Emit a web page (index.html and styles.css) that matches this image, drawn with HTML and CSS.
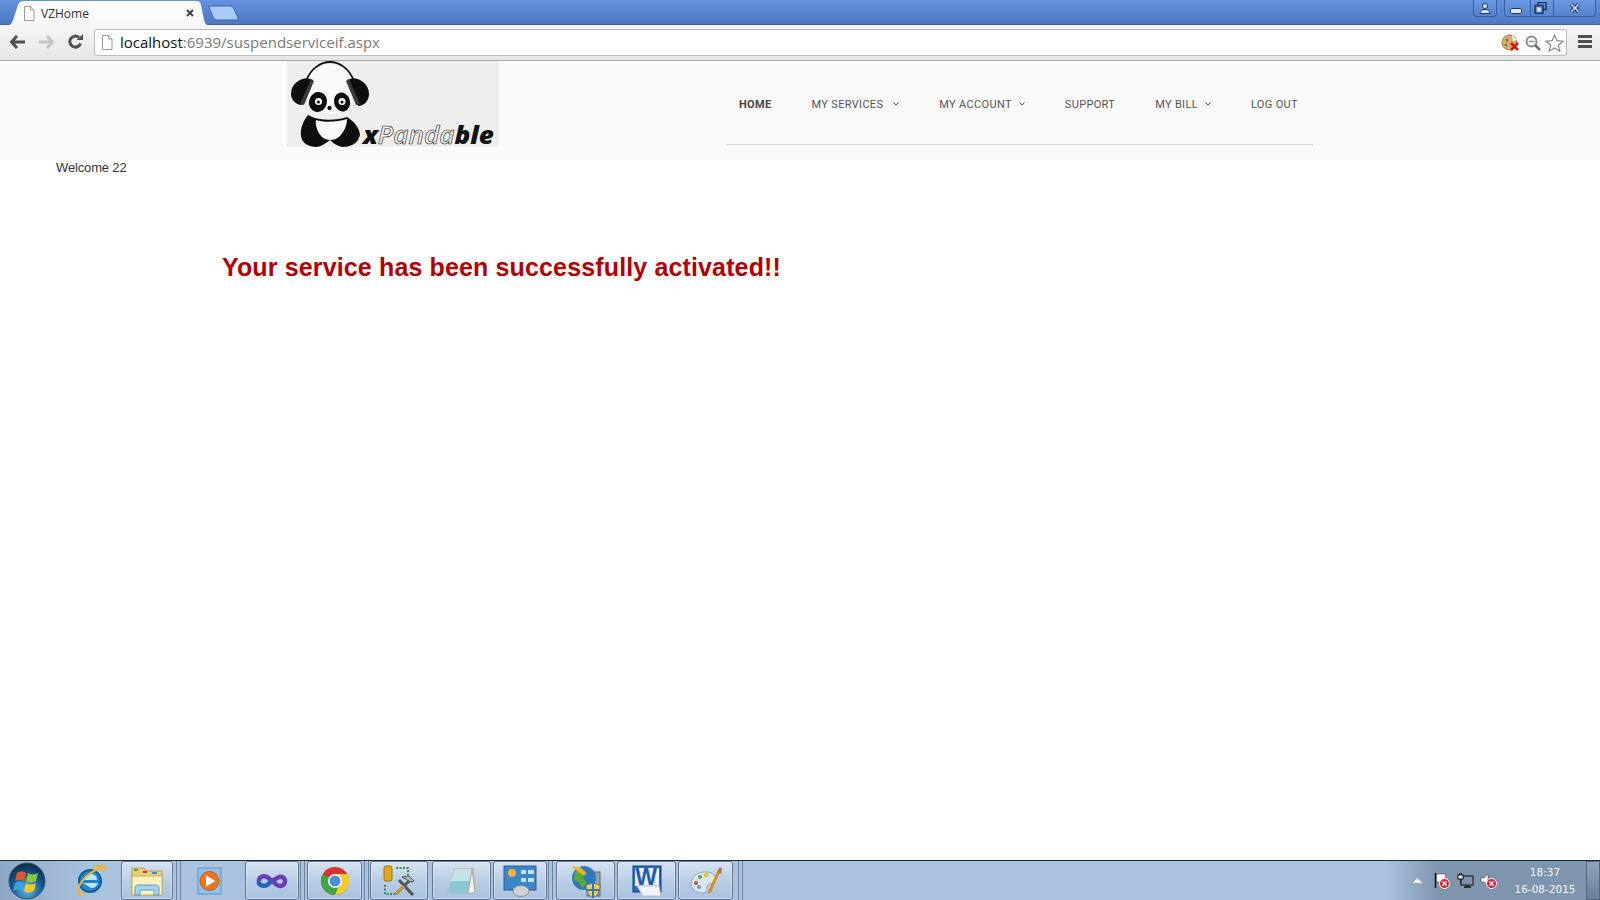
FILE: index.html
```html
<!DOCTYPE html>
<html lang="en">
<head>
  <meta charset="UTF-8">
  <meta name="viewport" content="width=device-width, initial-scale=1.0">
  <title>VZHome</title>
  <link rel="stylesheet" href="styles.css">
</head>
<body>
  <!-- browser chrome -->
  <div class="titlebar">
    <div class="tab">
      <svg class="page-icon" width="12" height="15" viewBox="0 0 12 15"><path d="M1.5 .5h6l3.5 3.5v10.5h-9.5z" fill="#fff" stroke="#9a9a9a"/><path d="M7.5 .5v3.5h3.5" fill="#eee" stroke="#9a9a9a"/></svg>
      <span class="tab-title">VZHome</span>
      <svg class="tab-close" width="8" height="8" viewBox="0 0 8 8"><path d="M1 1l6 6M7 1l-6 6" stroke="#444" stroke-width="2"/></svg>
    </div>
    <svg class="new-tab" width="34" height="16" viewBox="0 0 34 16"><path d="M1 1h21c2 0 3 1 4 3l4 9c.5 1.5 0 2-1.5 2H9c-2 0-3-1-4-3L1 2z" fill="#a9caf6" stroke="#3f66a8"/></svg>
    <div class="win-controls">
      <div class="win-btn win-user">
        <svg width="12" height="11" viewBox="0 0 12 11"><circle cx="6" cy="3" r="2.5" fill="#dbe6f7" stroke="#1d3760"/><path d="M1 10.5c0-3 2-4 5-4s5 1 5 4z" fill="#dbe6f7" stroke="#1d3760"/></svg>
      </div>
      <div class="win-group">
        <div class="win-btn win-min"><svg width="12" height="6" viewBox="0 0 12 6"><rect x=".5" y=".5" width="11" height="5" rx="1" fill="#dbe6f7" stroke="#1d3760"/></svg></div>
        <div class="win-btn win-max"><svg width="13" height="12" viewBox="0 0 13 12"><rect x="4" y=".5" width="8" height="7" fill="none" stroke="#1d3760" stroke-width="1.5"/><rect x="1" y="3.5" width="8" height="8" fill="#5b86d2" stroke="#1d3760" stroke-width="1.5"/><rect x="3" y="5.5" width="4" height="4" fill="#dbe6f7"/></svg></div>
        <div class="win-btn win-close"><svg width="12" height="10" viewBox="0 0 12 10"><path d="M2 1l8 8M10 1l-8 8" stroke="#1d3760" stroke-width="3.5"/><path d="M2 1l8 8M10 1l-8 8" stroke="#dbe6f7" stroke-width="1.5"/></svg></div>
      </div>
    </div>
  </div>

  <div class="toolbar">
    <svg class="tool-back" width="16" height="14" viewBox="0 0 16 14"><path d="M7 1L1.5 7 7 13M2 7h13" fill="none" stroke="#505050" stroke-width="3"/></svg>
    <svg class="tool-forward" width="16" height="14" viewBox="0 0 16 14"><path d="M9 1l5.5 6L9 13M14 7H1" fill="none" stroke="#c4c4c4" stroke-width="3"/></svg>
    <svg class="tool-reload" width="15" height="15" viewBox="0 0 15 15"><path d="M12.5 9.5A5.5 5.5 0 1 1 11 3.5" fill="none" stroke="#505050" stroke-width="3"/><path d="M8.5 6H15V0z" fill="#505050"/></svg>
    <div class="omnibox">
      <svg class="page-icon" width="12" height="15" viewBox="0 0 12 15"><path d="M1.5 .5h6l3.5 3.5v10.5h-9.5z" fill="#fff" stroke="#9a9a9a"/><path d="M7.5 .5v3.5h3.5" fill="#eee" stroke="#9a9a9a"/></svg>
      <div class="url"><span class="url-host">localhost</span>:6939/suspendserviceif.aspx</div>
      <svg class="omni-cookie" width="19" height="18" viewBox="0 0 19 18">
        <circle cx="8.5" cy="8.5" r="7.5" fill="#d2b06e" stroke="#9c7c3e"/>
        <circle cx="6" cy="6" r="1.5" fill="#8c6a2e"/><circle cx="5" cy="11" r="1.3" fill="#8c6a2e"/>
        <path d="M11 1l5 5-4 1z" fill="#fff"/>
        <path d="M10 9l7 7M17 9l-7 7" stroke="#d01818" stroke-width="2.5"/>
      </svg>
      <svg class="omni-zoom" width="16" height="16" viewBox="0 0 16 16"><circle cx="6.5" cy="6.5" r="5" fill="#fff" stroke="#8c8c8c" stroke-width="2"/><path d="M4 6.5h5" stroke="#8c8c8c" stroke-width="1.5"/><path d="M10 10l5 5" stroke="#6e6e6e" stroke-width="2.5"/></svg>
      <svg class="omni-star" width="19" height="18" viewBox="0 0 19 18"><path d="M9.5 1l2.4 5.7 6.1.5-4.6 4 1.4 6-5.3-3.2-5.3 3.2 1.4-6-4.600-4 6.100-.5z" fill="#fff" stroke="#8a8a8a" stroke-width="1.2"/></svg>
    </div>
    <div class="menu-icon"><span></span><span></span><span></span></div>
  </div>

  <!-- site -->
  <header class="site-header">
    <div class="logo">
      <svg width="212" height="92" viewBox="0 0 212 92">
        <rect width="212" height="88" fill="#ffffff"/>
        <rect width="212" height="86" fill="#efeeec"/>
        <ellipse cx="43" cy="28" rx="25" ry="25" fill="#f9f9f7"/>
        <path d="M19 20C24 7 34 1 43 1S62 7 67 20" fill="none" stroke="#111" stroke-width="1.8"/>
        <path d="M20 17C10 18 4 25 4 33 4 39 9 44 15 44 19 36 23 26 26 19z" fill="#0e0e0e"/>
        <path d="M24 18l3 2-10 24-4-1z" fill="#3a3a3a"/>
        <path d="M66 17C76 18 82 25 82 33 82 40 77 45 71 45 67 36 63 26 60 19z" fill="#0e0e0e"/>
        <path d="M62 18l-3 2 10 24 4-1z" fill="#3a3a3a"/>
        <ellipse cx="31" cy="41" rx="9" ry="10" transform="rotate(15 31 41)" fill="#0e0e0e"/>
        <circle cx="31.5" cy="40.5" r="3.5" fill="#fff"/><circle cx="31.5" cy="41" r="1.5" fill="#111"/>
        <ellipse cx="55" cy="41" rx="8" ry="9.5" transform="rotate(-15 55 41)" fill="#0e0e0e"/>
        <circle cx="55" cy="40.5" r="3.5" fill="#fff"/><circle cx="55" cy="41" r="1.5" fill="#111"/>
        <circle cx="42.5" cy="47" r="2.2" fill="#111"/>
        <path d="M21 54C16 60 13 68 14 75 15 82 21 86 30 86 35 85 39 82 43 79 47 83 51 85 55 86 63 86 71 83 73 74 73 68 67 60 60 56 48 60 32 60 21 54z" fill="#0e0e0e"/>
        <path d="M29 59C38 62 50 61 60 58 60 65 57 71 52 76 47 80 40 80 35 76 31 72 28 65 29 59z" fill="#f9f9f7"/>
        <text class="logo-text" x="76" y="83" textLength="131" lengthAdjust="spacingAndGlyphs"><tspan>x</tspan><tspan class="logo-hollow">Panda</tspan><tspan>ble</tspan></text>
      </svg>
    </div>
    <nav class="main-nav">
      <a class="nav-item active" href="#">Home</a>
      <a class="nav-item" href="#">My Services<svg class="chev chev-wide" width="6" height="4" viewBox="0 0 6 4"><path d="M.5.5L3 3 5.5.5" fill="none" stroke="#555"/></svg></a>
      <a class="nav-item" href="#">My Account<svg class="chev" width="6" height="4" viewBox="0 0 6 4"><path d="M.5.5L3 3 5.5.5" fill="none" stroke="#555"/></svg></a>
      <a class="nav-item" href="#">Support</a>
      <a class="nav-item" href="#">My Bill<svg class="chev" width="6" height="4" viewBox="0 0 6 4"><path d="M.5.5L3 3 5.5.5" fill="none" stroke="#555"/></svg></a>
      <a class="nav-item" href="#">Log Out</a>
    </nav>
  </header>

  <main class="content">
    <p class="welcome">Welcome 22</p>
    <h1 class="message">Your service has been successfully activated!!</h1>
  </main>

  <!-- windows taskbar -->
  <footer class="taskbar">
    <div class="start-orb">
      <svg width="38" height="38" viewBox="0 0 38 38">
        <defs><radialGradient id="orb" cx=".5" cy=".75" r=".7"><stop offset="0" stop-color="#5cc1ee"/><stop offset=".6" stop-color="#14598f"/><stop offset="1" stop-color="#0c2f50"/></radialGradient></defs>
        <circle cx="19" cy="19" r="18" fill="url(#orb)" stroke="#34566f"/>
        <path d="M9 11c4-2 6-2 9 0l-2 8c-3-2-6-2-9 0z" fill="#e9562c"/>
        <path d="M20 11c3 2 6 2 10 0l-2 8c-4 2-7 2-10 0z" fill="#8cc63f"/>
        <path d="M7 21c3-2 6-2 9 0l-2 8c-3-2-6-2-9 0z" fill="#3aa0e0"/>
        <path d="M18 21c3 2 6 2 10 0l-2 8c-4 2-7 2-10 0z" fill="#f7c52b"/>
      </svg>
    </div>
    <div class="tb-plain tb-ie">
      <svg width="34" height="34" viewBox="0 0 34 34">
        <path d="M7 22C2 31 6 33 14 27M20 4c9-4 14-3 11 4" fill="none" stroke="#f0b429" stroke-width="2"/>
        <circle cx="17" cy="17" r="11" fill="#1f86cf"/>
        <circle cx="17" cy="17" r="11" fill="none" stroke="#0f5d9c" stroke-width="2"/>
        <path d="M11 16h13c0-8-12-8-13 0zM10 19h15c-1 3-3 5-7 5" fill="#bfe3f7"/>
        <path d="M5 24C11 12 20 6 31 3" fill="none" stroke="#f0b429" stroke-width="2"/>
      </svg>
    </div>
    <div class="tb-btn tb-folder">
      <svg width="34" height="30" viewBox="0 0 34 30">
        <path d="M2 2h12l2 3h16v24H2z" fill="#e8cf7c" stroke="#b99c4a"/>
        <rect x="4" y="3" width="4" height="2" fill="#3fae3f"/><rect x="13" y="5" width="4" height="2" fill="#c83a2c"/><rect x="22" y="6" width="5" height="2" fill="#3b86d6"/>
        <path d="M2 10h30v19H2z" fill="#fdf3bf" stroke="#c9ae5b"/>
        <path d="M5 29v-7c0-2 1-3 3-3h18c2 0 3 1 3 3v7h-5v-5H10v5z" fill="#a4d3ee" stroke="#5f9bc4"/>
      </svg>
    </div>
    <div class="tb-sep tb-sep-a"></div>
    <div class="tb-plain tb-wmp">
      <svg width="30" height="30" viewBox="0 0 30 30">
        <rect x="3" y="2" width="23" height="26" fill="#8ec2e8" stroke="#5a98c8"/>
        <circle cx="14.5" cy="15" r="9.5" fill="#f0761e" stroke="#c9590c"/>
        <path d="M11 9.5l9.5 5.5-9.5 5.5z" fill="#fff"/>
      </svg>
    </div>
    <div class="tb-btn tb-vs">
      <svg width="34" height="20" viewBox="0 0 34 20">
        <path d="M4 10C4 6 8 4 12 6l5 4 5 4c3 2 7 1 8-3 .5-3-2-6-6-5l-7 4" fill="none" stroke="#6a3eb8" stroke-width="4.5"/>
        <path d="M17 10l-5 4c-4 2-9 0-8-4" fill="none" stroke="#2464b4" stroke-width="4.5"/>
      </svg>
    </div>
    <div class="tb-sep tb-sep-v"></div>
    <div class="tb-btn tb-chrome">
      <svg width="30" height="30" viewBox="0 0 30 30">
        <circle cx="15" cy="15" r="14" fill="#d8322c"/>
        <path d="M15 15L3 8A14 14 0 0 0 15 29l7-2z" fill="#3aa648"/>
        <path d="M15 8h12.4A14 14 0 0 1 15 29l6-14z" fill="#f7ca2e"/>
        <circle cx="15" cy="15" r="7" fill="#fff"/>
        <circle cx="15" cy="15" r="5.5" fill="#4a8ed8"/>
      </svg>
    </div>
    <div class="tb-sep tb-sep-b"></div>
    <div class="tb-btn tb-tool">
      <svg width="34" height="32" viewBox="0 0 34 32">
        <rect x="2" y="1" width="8" height="15" rx="2" fill="#e3a51c" stroke="#a97510"/>
        <path d="M14 3h12v12M3 20v9h12" fill="none" stroke="#3f8f3f" stroke-width="2" stroke-dasharray="2 1.5"/>
        <path d="M14 29L29 14M17 15l14 15" stroke="#555" stroke-width="3"/>
        <path d="M14 29L22 21" stroke="#c99a3a" stroke-width="3"/>
        <path d="M20 12l7-1 5 5-3 1-4-2z" fill="#aab4c0" stroke="#555"/>
      </svg>
    </div>
    <div class="tb-btn tb-notepad">
      <svg width="32" height="30" viewBox="0 0 32 30">
        <path d="M8 2h20l2 24H2z" fill="#c8c0a8"/>
        <path d="M9 3h17l-4 25H1z" fill="#8cc6d4"/>
        <path d="M9 3h17l-2 12H5z" fill="#c0e4ea"/>
        <path d="M26 3l3 23-7 2z" fill="#f4f2ea" stroke="#aaa"/>
      </svg>
    </div>
    <div class="tb-btn tb-panel">
      <svg width="34" height="32" viewBox="0 0 34 32">
        <rect x="1" y="1" width="32" height="24" fill="#3b86c8" stroke="#20609c"/>
        <circle cx="9" cy="8" r="4" fill="#f3b33a"/>
        <rect x="18" y="5" width="5" height="4" fill="#bfe0f5"/><rect x="25" y="5" width="6" height="4" fill="#bfe0f5"/>
        <rect x="18" y="13" width="5" height="4" fill="#bfe0f5"/><rect x="25" y="13" width="6" height="4" fill="#bfe0f5"/>
        <ellipse cx="18" cy="26" rx="8" ry="5.5" fill="#cfd2d4" stroke="#8a8f92"/>
      </svg>
    </div>
    <div class="tb-sep tb-sep-c"></div>
    <div class="tb-btn tb-shield">
      <svg width="34" height="34" viewBox="0 0 34 34">
        <rect x="18" y="8" width="13" height="24" fill="#9aa2a8" stroke="#666"/>
        <circle cx="15" cy="14" r="12" fill="#2f77c0"/>
        <path d="M6 8c4-4 9-3 11 0l-3 6 4 5-5 6-3-7-5-2z" fill="#5da832"/>
        <path d="M2 3h9l7 7-4 1-7-5z" fill="#f2b325"/>
        <path d="M17 21l7-2 7 2c0 7-3 11-7 13-4-2-7-6-7-13z" fill="#f7cf3c" stroke="#4878b8"/>
        <path d="M24 19v15M17 26h14" stroke="#2f77c0" stroke-width="2"/>
      </svg>
    </div>
    <div class="tb-btn tb-word">
      <svg width="32" height="32" viewBox="0 0 32 32">
        <rect x="2" y="1" width="28" height="26" fill="#2a6cc0" stroke="#123d7c"/>
        <rect x="4" y="3" width="24" height="18" fill="#e8f0fa"/>
        <path d="M6 21h22l2 10H12z" fill="#f2f4f7" stroke="#b8bcc4"/>
        <text class="word-w" x="15" y="20" text-anchor="middle">W</text>
      </svg>
    </div>
    <div class="tb-btn tb-paint">
      <svg width="34" height="32" viewBox="0 0 34 32">
        <path d="M2 19C2 10 11 6 19 7c6 1 9 5 7 9-2 3-7 2-8 5-1 2 1 4-1 6-5 3-15-1-15-8z" fill="#d8e6f0" stroke="#8fa8bc"/>
        <circle cx="7" cy="18" r="2" fill="#d04a4a"/><circle cx="11" cy="12" r="2" fill="#5fa84a"/><circle cx="17" cy="10" r="2.5" fill="#f0c030"/><circle cx="10" cy="22" r="2" fill="#6a9ad0"/>
        <path d="M20 28L30 6" stroke="#e08a1c" stroke-width="3"/>
        <path d="M28 7l3-5 2 2-1 5z" fill="#a87848"/>
      </svg>
    </div>
    <div class="tb-sep tb-sep-d"></div>

    <div class="tray">
      <svg class="tray-caret" width="9" height="5" viewBox="0 0 9 5"><path d="M4.5 0L9 5H0z" fill="#fff"/></svg>
      <svg class="tray-icon" width="17" height="17" viewBox="0 0 17 17">
        <path d="M2.5 1v15" stroke="#111" stroke-width="1.5"/><path d="M3.5 2h9v8h-9z" fill="#fff" stroke="#333" stroke-width=".5"/>
        <circle cx="11.5" cy="11.5" r="5" fill="#d6263a" stroke="#fff"/><path d="M9.5 9.5l4 4M13.5 9.500l-4 4" stroke="#fff" stroke-width="1.5"/>
      </svg>
      <svg class="tray-icon tray-net" width="17" height="17" viewBox="0 0 17 17">
        <rect x="4" y="4" width="12" height="9" fill="#7e93ab" stroke="#111"/><path d="M7 15h7" stroke="#111" stroke-width="1.5"/><path d="M10 13v2" stroke="#111"/>
        <rect x="1" y="3" width="5" height="4" fill="#fff" stroke="#111"/><path d="M2.5 1v2M4.5 1v2M3.5 7v4" stroke="#111"/>
      </svg>
      <svg class="tray-icon" width="17" height="17" viewBox="0 0 17 17">
        <path d="M1 6h3l4-4v12l-4-4H1z" fill="#fff" stroke="#333" stroke-width=".5"/>
        <circle cx="11.5" cy="11.5" r="5" fill="#d6263a" stroke="#fff"/><path d="M9.5 9.5l4 4M13.5 9.5l-4 4" stroke="#fff" stroke-width="1.5"/>
      </svg>
      <div class="clock">
        <div>18:37</div>
        <div>16-08-2015</div>
      </div>
      <div class="show-desktop"></div>
    </div>
  </footer>
</body>
</html>
```

FILE: styles.css
```css
* {
  margin: 0;
  padding: 0;
  box-sizing: border-box;
}

body {
  width: 1600px;
  height: 900px;
  overflow: hidden;
  display: flex;
  flex-direction: column;
  background-color: #ffffff;
  font-family: 'Liberation Sans', Arial, sans-serif;
}

/* browser chrome */
.titlebar {
  height: 25px;
  flex: none;
  display: flex;
  align-items: flex-start;
  background: linear-gradient(#6492de, #4c78c4);
  border-bottom: 1px solid #3c619f;
}

.tab {
  width: 200px;
  height: 25px;
  margin-left: 8px;
  padding: 1px 14px 0 15px;
  display: flex;
  align-items: center;
  gap: 6px;
  flex: none;
  background: linear-gradient(#ffffff, #f6f6f6);
  clip-path: path('M0 25C3 25 4 23 5 20L10 5C11 2 13 1 16 1H189C191 1 192 2 193 5L196 20C197 23 198 25 200 25Z');
}

.tab-title {
  flex: 1;
  font-family: 'Open Sans', sans-serif;
  font-size: 12px;
  color: #333333;
}

.tab-close {
  flex: none;
}

.new-tab {
  flex: none;
  margin-top: 5px;
}

.win-controls {
  margin-left: auto;
  margin-right: 4px;
  display: flex;
  gap: 7px;
  height: 17px;
}

.win-group {
  display: flex;
  border: 1px solid #3a5f9c;
  border-top: 0;
  border-radius: 0 0 4px 4px;
  background: linear-gradient(#6a98e2, #5682cf);
}

.win-btn {
  display: flex;
  align-items: center;
  justify-content: center;
}

.win-user {
  width: 24px;
  border: 1px solid #3a5f9c;
  border-top: 0;
  border-radius: 0 0 4px 4px;
  background: linear-gradient(#6a98e2, #5682cf);
}

.win-min {
  width: 25px;
  padding: 5px 3px 0 0;
}

.win-max {
  width: 24px;
  padding-right: 3px;
  border-left: 1px solid #3a5f9c;
  border-right: 1px solid #3a5f9c;
}

.win-close {
  width: 41px;
}

.toolbar {
  height: 36px;
  padding-bottom: 2px;
  flex: none;
  display: flex;
  align-items: center;
  background: linear-gradient(#f6f6f6, #e6e6e6);
  border-bottom: 1px solid #a8a8a8;
}

.tool-back {
  margin-left: 10px;
  flex: none;
}

.tool-forward {
  margin-left: 12px;
  flex: none;
}

.tool-reload {
  margin-left: 14px;
  flex: none;
}

.omnibox {
  width: 1473px;
  height: 27px;
  margin: 2px 0 0 11px;
  padding: 0 2px 0 6px;
  display: flex;
  align-items: center;
  flex: none;
  background-color: #ffffff;
  border: 1px solid #bdbdbd;
  border-radius: 2px;
}

.url {
  flex: 1;
  margin-left: 7px;
  padding-bottom: 2px;
  font-family: 'Open Sans', sans-serif;
  font-size: 15px;
  color: #7a7a7a;
}

.url-host {
  color: #111111;
}

.omni-zoom {
  margin-left: 5px;
}

.omni-star {
  margin-left: 4px;
}

.menu-icon {
  width: 14px;
  margin-left: 11px;
  display: flex;
  flex-direction: column;
  gap: 2px;
}

.menu-icon span {
  height: 3px;
  background-color: #505050;
}

/* site header */
.site-header {
  height: 99px;
  flex: none;
  display: flex;
  align-items: flex-start;
  background-color: #fafafa;
}

.logo {
  margin-left: 287px;
  flex: none;
}

.logo svg {
  display: block;
}

.logo-text {
  font-family: 'Open Sans', sans-serif;
  font-size: 25px;
  font-weight: 800;
  font-style: italic;
  fill: #111111;
}

.logo-hollow {
  font-weight: 600;
  fill: #eeeeee;
  stroke: #222222;
  stroke-width: 0.6;
}

.word-w {
  font-family: 'Liberation Sans', sans-serif;
  font-size: 23px;
  font-weight: 700;
  fill: #1f5cb0;
}

.main-nav {
  width: 587px;
  height: 84px;
  margin-left: 227px;
  display: flex;
  gap: 14px;
  border-bottom: 1px solid #d5d5d5;
}

.nav-item {
  padding: 37px 13px 0;
  display: flex;
  align-items: flex-start;
  flex: none;
  white-space: nowrap;
  font-family: Roboto, sans-serif;
  font-size: 11px;
  line-height: 14px;
  letter-spacing: 0.33px;
  text-transform: uppercase;
  text-decoration: none;
  color: #555555;
}

.nav-item.active {
  font-weight: 700;
  color: #444444;
}

.chev {
  margin: 4px 0 0 7px;
}

.chev-wide {
  margin-left: 10px;
}

/* page content */
.content {
  flex: 1;
}

.welcome {
  margin: 0 0 0 56px;
  font-size: 13px;
  line-height: 15px;
  letter-spacing: -0.15px;
  color: #333344;
}

.message {
  margin: 77px 0 0 222px;
  font-size: 25px;
  line-height: 30px;
  font-weight: 700;
  letter-spacing: 0.14px;
  color: #b20000;
}

/* taskbar */
.taskbar {
  height: 40px;
  flex: none;
  display: flex;
  align-items: stretch;
  background: linear-gradient(90deg, #8ea7c4 0, #a9c2de 90px, #a9c2de 1385px, #7f94ad 1440px, #7f94ad 100%);
  border-top: 1px solid #1f2a38;
}

.start-orb {
  width: 54px;
  display: flex;
  align-items: center;
  justify-content: center;
  flex: none;
}

.tb-plain,
.tb-btn {
  display: flex;
  align-items: center;
  justify-content: center;
  flex: none;
}

.tb-btn {
  margin: 0 1px;
  border: 1px solid #5f7590;
  border-radius: 3px;
  background: linear-gradient(#d6e3f1, #b6cce4 55%, #a9c2de);
  box-shadow: inset 0 0 0 1px rgba(255, 255, 255, 0.35);
}

.tb-ie {
  width: 66px;
  padding-left: 6px;
}

.tb-folder {
  width: 52px;
}

.tb-sep {
  width: 5px;
  flex: none;
  border-left: 1px solid #6d84a0;
  border-right: 1px solid #6d84a0;
}

.tb-sep-a {
  margin-left: 2px;
}

.tb-wmp {
  width: 63px;
  padding-right: 5px;
}

.tb-vs {
  width: 54px;
}

.tb-sep-v {
  margin-right: 1px;
}

.tb-chrome {
  width: 55px;
}

.tb-sep-b {
  margin-left: 1px;
}

.tb-tool {
  width: 58px;
}

.tb-notepad {
  width: 59px;
  margin-left: 3px;
}

.tb-panel {
  width: 54px;
}

.tb-sep-c {
  margin-right: 2px;
}

.tb-shield {
  width: 59px;
}

.tb-word {
  width: 59px;
}

.tb-paint {
  width: 55px;
}

.tb-sep-d {
  margin-left: 4px;
}

.tray {
  margin-left: auto;
  display: flex;
  align-items: center;
}

.tray-caret {
  margin-right: 11px;
}

.tray-icon {
  margin-right: 7px;
}

.tray-net {
  margin-right: 6px;
}

.clock {
  width: 76px;
  margin-left: 3px;
  font-family: 'DejaVu Sans', sans-serif;
  font-size: 10.5px;
  line-height: 17px;
  text-align: center;
  color: #f4f7fb;
}

.show-desktop {
  width: 14px;
  height: 100%;
  margin-left: 3px;
  background: linear-gradient(#8fa3ba, #6a7f98);
  border: 1px solid #54677f;
}
```
